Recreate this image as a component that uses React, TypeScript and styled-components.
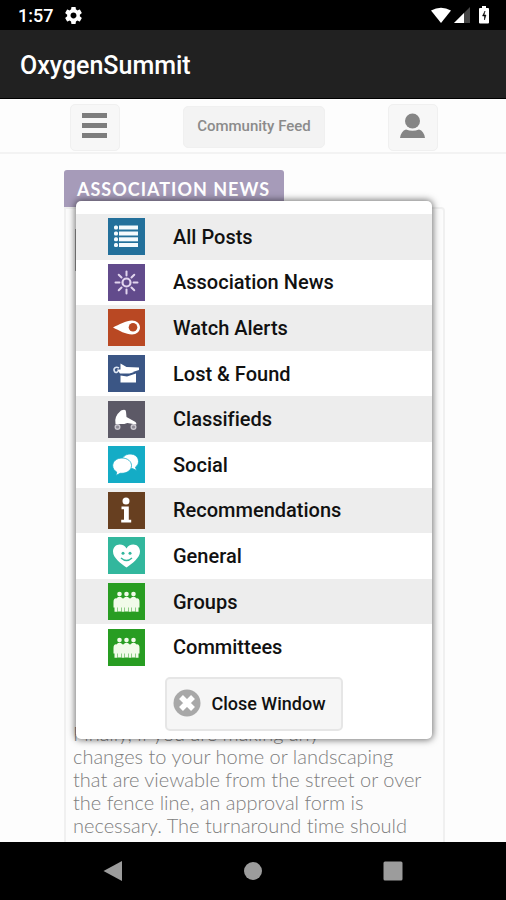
import React from "react";
import styled, { createGlobalStyle } from "styled-components";

const GlobalStyle = createGlobalStyle`
  *, *::before, *::after { box-sizing: border-box; }
  body {
    margin: 0;
    background: #000;
    font-family: Roboto, "Liberation Sans", sans-serif;
    font-variant-ligatures: none;
  }
  button { font: inherit; color: inherit; cursor: pointer; padding: 0; }
`;

const Screen = styled.div`
  display: flex;
  flex-direction: column;
  height: 100vh;
  overflow: hidden;
`;

const StatusBar = styled.div`
  display: flex;
  flex: none;
  align-items: center;
  justify-content: space-between;
  height: 30px;
  padding: 0 15px 0 18px;
  background: #000;
  color: #fff;
  font-size: 18px;
  font-weight: 500;
`;

const StatusGroup = styled.div<{ $gap: number }>`
  display: flex;
  align-items: center;
  gap: ${(p) => p.$gap}px;
`;

const AppBar = styled.header`
  display: flex;
  flex: none;
  align-items: center;
  height: 69px;
  padding: 4px 20px 0;
  background: #212121;
  border-bottom: 1px solid #000;
`;

const AppTitle = styled.h1`
  margin: 0;
  color: #fff;
  font-size: 25px;
  font-weight: 500;
  line-height: 28px;
`;

const Content = styled.div`
  position: relative;
  flex: 1;
  min-height: 0;
  overflow: hidden;
  background: #fdfdfd;
`;

const Toolbar = styled.nav`
  display: flex;
  align-items: center;
  justify-content: space-between;
  height: 55px;
  padding: 3px 68px 0 70px;
  border-bottom: 2px solid #f3f3f3;
`;

const ToolButton = styled.button<{ $wide?: boolean }>`
  display: flex;
  align-items: center;
  justify-content: center;
  width: ${(p) => (p.$wide ? 142 : 50)}px;
  height: ${(p) => (p.$wide ? 42 : 47)}px;
  padding-bottom: 2px;
  border: 1px solid #f0f0f0;
  border-radius: 5px;
  background: ${(p) => (p.$wide ? "#f3f3f3" : "#f7f7f7")};
  color: #8b8b8b;
  font-size: 15px;
  font-weight: 500;
`;

const Post = styled.article`
  margin: 16px 61px 0 64px;
`;

const PostTag = styled.h2`
  width: fit-content;
  height: 37px;
  margin: 0;
  padding: 0 14px 0 13px;
  border-radius: 3px 3px 0 0;
  background: #a69bb9;
  color: #fff;
  font-family: Lato, sans-serif;
  font-size: 18px;
  font-weight: 700;
  line-height: 38px;
  letter-spacing: 1px;
`;

const PostBody = styled.div`
  padding: 20px 9px 24px;
  border: 2px solid #f0f0f0;
  border-radius: 0 4px 0 0;
  background: #fcfcfc;
`;

const PostHeader = styled.div`
  display: flex;
  height: 493px;
`;

const Avatar = styled.div`
  width: 42px;
  height: 42px;
  background: #9a9a9a;
`;

const PostText = styled.p`
  margin: 0 0 0 -2px;
  color: #7e7e7e;
  font-family: Lato, sans-serif;
  font-size: 20px;
  font-weight: 300;
  line-height: 23px;
  white-space: pre-line;
`;

const Overlay = styled.div`
  position: absolute;
  inset: 0;
  padding: 102px 74px 0 76px;
`;

const Dialog = styled.section`
  display: flex;
  flex-direction: column;
  padding: 13px 0 8px;
  border-radius: 5px;
  background: #fff;
  box-shadow: 0 0 7px 1px rgba(0, 0, 0, 0.55);
`;

const CategoryList = styled.ul`
  display: grid;
  grid-auto-rows: 1fr;
  height: 456px;
  margin: 0;
  padding: 0;
  list-style: none;
`;

const CategoryItem = styled.li`
  display: flex;
  background: #fff;
  &:nth-child(odd) { background: #ededed; }
`;

const CategoryButton = styled.button`
  display: flex;
  align-items: center;
  gap: 28px;
  width: 100%;
  padding: 0 32px;
  border: 0;
  background: none;
  color: #111;
  font-size: 20px;
  font-weight: 500;
  text-align: left;
`;

const Tile = styled.svg<{ $color: string }>`
  flex: none;
  width: 37px;
  height: 37px;
  background: ${(p) => p.$color};
`;

const CloseButton = styled.button`
  display: flex;
  align-items: center;
  align-self: center;
  gap: 10px;
  height: 54px;
  margin-top: 7px;
  padding: 0 15px 2px 6px;
  border: 2px solid #e6e6e6;
  border-radius: 5px;
  background: #f6f6f6;
  color: #111;
  font-size: 18px;
  font-weight: 500;
`;

const SystemNav = styled.nav`
  display: flex;
  flex: none;
  justify-content: center;
  height: 58px;
  background: #000;
`;

const SystemButton = styled.button`
  display: flex;
  align-items: center;
  justify-content: center;
  width: 140px;
  border: 0;
  background: none;
`;

const people = (
  <g fill="#f1fbe9">
    {[11.5, 18.5, 25.5].map((x) => (
      <g key={x}>
        <circle cx={x} cy="11" r="2.3" />
        <path d={`M${x - 2.7} 15q2.7-2.6 5.4 0v7h-1.2v6.500h-3V22h-1.2z`} />
      </g>
    ))}
    {[8, 15, 22, 29].map((x) => (
      <path key={x} d={`M${x - 2.5} 19q0-3.700 2.500-3.700t2.500 3.700v5.500h-1v4.300h-3v-4.300h-1z`} />
    ))}
  </g>
);

type Category = { label: string; color: string; art: React.ReactNode };

const categories: Category[] = [
  {
    label: "All Posts",
    color: "#23709b",
    art: (
      <g fill="#f4fafd">
        {[7.5, 13.5, 19.3, 25].map((y) => (
          <g key={y}>
            <rect x="6" y={y} width="4" height="4" rx="1.5" />
            <rect x="11" y={y} width="19" height="4" />
          </g>
        ))}
      </g>
    ),
  },
  {
    label: "Association News",
    color: "#624b8c",
    art: (
      <g stroke="#e2d5ee" strokeWidth="2" strokeLinecap="round" fill="none">
        <circle cx="18.5" cy="18.5" r="4" strokeWidth="2.2" />
        {[0, 45, 90, 135, 180, 225, 270, 315].map((a) => (
          <path key={a} d="M18.5 11.500V7.500" transform={`rotate(${a} 18.5 18.5)`} />
        ))}
      </g>
    ),
  },
  {
    label: "Watch Alerts",
    color: "#b94823",
    art: (
      <g>
        <path d="M5 18.5C11 15.5 18 11.5 24 11.5c4.5 0 8 3 8 7s-3.500 7-8 7c-6 0-13-4-19-7z" fill="#fff" />
        <circle cx="25" cy="18.300" r="4.300" fill="#b94823" />
      </g>
    ),
  },
  {
    label: "Lost & Found",
    color: "#3b5685",
    art: (
      <g fill="#fff">
        <path d="M11 13C7.500 11 5 13.500 6.500 16.500c1 1.700 3.500 1 3.500-1" fill="none" stroke="#dce6f3" strokeWidth="1.600" />
        <path d="M12.500 8.500l6 3.500 12.500.5v2.500l-9.500 3h-9z" />
        <path d="M9 14.500h12l5 2.500-4.500 1.500H12z" />
        <path d="M12.500 20.500l6.500 1 9-3v9H12.500z" />
      </g>
    ),
  },
  {
    label: "Classifieds",
    color: "#5c5966",
    art: (
      <g fill="#fff">
        <path d="M13 9.500q5-2 5 1.200l.5 5.300 9 5q1.200 1 .8 2.500l-9-1.500-3 1H7.500q-1.700-7.500 5.500-13.500z" />
        <circle cx="9.500" cy="26" r="2.300" fill="#8d8a95" stroke="#c9c6ce" strokeWidth="1.400" />
        <circle cx="25.500" cy="26" r="2.300" fill="#8d8a95" stroke="#c9c6ce" strokeWidth="1.400" />
      </g>
    ),
  },
  {
    label: "Social",
    color: "#14acc6",
    art: (
      <g fill="#fff" stroke="#14acc6" strokeWidth="0.800">
        <path d="M22 8c5 0 8.500 3 8.500 7.500 0 2.400-1.200 4.300-3 5.500l1 3.500-4-2c-6 1-11-2-11-7 0-4 4-7.500 8.500-7.500z" />
        <path d="M14 12c5.500 0 9.500 3.400 9.500 7.600s-4 7.700-9.500 7.700h-1.800L8 29.500l.7-3.500c-2.500-1.200-4-3.700-4-6.400 0-4.200 4-7.600 9.300-7.600z" />
      </g>
    ),
  },
  {
    label: "Recommendations",
    color: "#673f20",
    art: (
      <g fill="#fff">
        <circle cx="18" cy="9" r="3.500" />
        <path d="M13.500 14.500h7.300v13.300h2.400v2.700h-10v-2.700H16V17.200h-2.500z" />
      </g>
    ),
  },
  {
    label: "General",
    color: "#32b79d",
    art: (
      <g>
        <path d="M18.500 30.500C13 26.500 5 21 5 14.500 5 10.300 8 7.500 11.700 7.500c3 0 5.500 1.500 6.800 4 1.300-2.500 3.800-4 6.800-4 3.700 0 6.700 2.800 6.700 7 0 6.500-8 12-13.500 16z" fill="#fff" />
        <circle cx="15" cy="16.300" r="1.500" fill="#32b79d" />
        <circle cx="22" cy="16.300" r="1.500" fill="#32b79d" />
        <path d="M13 21q5.500 5 11 0" fill="none" stroke="#32b79d" strokeWidth="1.400" />
      </g>
    ),
  },
  { label: "Groups", color: "#289d22", art: people },
  { label: "Committees", color: "#289d22", art: people },
];

export default function App() {
  return (
    <Screen>
      <GlobalStyle />
      <StatusBar>
        <StatusGroup $gap={12}>
          <span>1:57</span>
          <svg width="17" height="17" viewBox="2 2 20 20" aria-hidden="true">
            <path fill="#fff" d="M19.430 12.980c.04-.320.070-.640.070-.980s-.030-.660-.070-.980l2.110-1.650c.190-.150.240-.420.120-.640l-2-3.460c-.120-.220-.390-.300-.610-.220l-2.490 1c-.520-.400-1.080-.730-1.690-.980l-.380-2.650C14.460 2.180 14.250 2 14 2h-4c-.250 0-.460.180-.490.420l-.380 2.650c-.610.250-1.170.590-1.690.980l-2.490-1c-.230-.090-.490 0-.610.220l-2 3.460c-.130.220-.070.490.120.640l2.110 1.650c-.040.320-.070.650-.070.980s.030.660.070.980l-2.110 1.650c-.190.150-.240.420-.120.640l2 3.460c.120.220.390.300.610.220l2.490-1c.520.400 1.080.730 1.690.980l.380 2.650c.030.240.240.420.490.420h4c.250 0 .460-.180.490-.420l.380-2.650c.610-.250 1.170-.590 1.690-.980l2.490 1c.230.090.490 0 .610-.220l2-3.460c.120-.220.070-.490-.120-.640l-2.110-1.650zM12 15.500c-1.930 0-3.500-1.570-3.500-3.500s1.570-3.500 3.500-3.500 3.500 1.570 3.500 3.500-1.570 3.500-3.500 3.500z" />
          </svg>
        </StatusGroup>
        <StatusGroup $gap={2}>
          <svg width="20" height="18" viewBox="0 0 20 18" aria-hidden="true">
            <path d="M0 4.500Q10-1 20 4.500L10 17z" fill="#fff" />
          </svg>
          <svg width="17" height="18" viewBox="0 0 17 18" aria-hidden="true">
            <path d="M17 1v16H1z" fill="#454545" />
            <path d="M11 7v10H1z" fill="#fff" />
          </svg>
          <svg width="19" height="18" viewBox="0 0 19 18" aria-hidden="true">
            <path d="M10 2V0h4v2h2q1 0 1 1v13.500q0 1-1 1H8q-1 0-1-1V3q0-1 1-1z" fill="#fff" />
            <path d="M13 5L10.500 10h2v4L14 9h-2z" fill="#000" stroke="#000" strokeWidth="0.500" />
          </svg>
        </StatusGroup>
      </StatusBar>

      <AppBar>
        <AppTitle>OxygenSummit</AppTitle>
      </AppBar>

      <Content>
        <Toolbar>
          <ToolButton aria-label="Menu">
            <svg width="26" height="26" viewBox="0 0 26 26">
              <path d="M0 0h25v5H0zM0 10h25v5H0zM0 20h25v5H0z" fill="#7d7d7d" />
            </svg>
          </ToolButton>
          <ToolButton $wide>Community Feed</ToolButton>
          <ToolButton aria-label="Profile">
            <svg width="26" height="26" viewBox="0 0 26 26">
              <circle cx="12.500" cy="8" r="7.500" fill="#858585" />
              <path d="M0 25q1-7 6-8.500Q12.500 19 19 16.500q5 1.500 6 8.500z" fill="#858585" />
            </svg>
          </ToolButton>
        </Toolbar>

        <Post>
          <PostTag>ASSOCIATION NEWS</PostTag>
          <PostBody>
            <PostHeader>
              <Avatar />
            </PostHeader>
            <PostText>
              {"Finally, if you are making any\nchanges to your home or landscaping\nthat are viewable from the street or over\nthe fence line, an approval form is\nnecessary. The turnaround time should"}
            </PostText>
          </PostBody>
        </Post>

        <Overlay>
          <Dialog role="dialog" aria-label="Categories">
            <CategoryList>
              {categories.map((c) => (
                <CategoryItem key={c.label}>
                  <CategoryButton>
                    <Tile $color={c.color} viewBox="0 0 37 37" aria-hidden="true">
                      {c.art}
                    </Tile>
                    {c.label}
                  </CategoryButton>
                </CategoryItem>
              ))}
            </CategoryList>
            <CloseButton>
              <svg width="28" height="28" viewBox="0 0 28 28" aria-hidden="true">
                <circle cx="14" cy="14" r="13.500" fill="#a8a8a8" />
                <path d="M8 8l12 12M20 8L8 20" stroke="#fff" strokeWidth="5.500" />
              </svg>
              Close Window
            </CloseButton>
          </Dialog>
        </Overlay>
      </Content>

      <SystemNav>
        <SystemButton aria-label="Back">
          <svg width="20" height="22" viewBox="0 0 20 22"><path d="M0.500 11L19 1v20z" fill="#9c9c9c" /></svg>
        </SystemButton>
        <SystemButton aria-label="Home">
          <svg width="20" height="20" viewBox="0 0 20 20"><circle cx="10" cy="10" r="9" fill="#9c9c9c" /></svg>
        </SystemButton>
        <SystemButton aria-label="Recent apps">
          <svg width="20" height="20" viewBox="0 0 20 20"><rect x="0.500" y="0.500" width="19" height="19" rx="1.500" fill="#9c9c9c" /></svg>
        </SystemButton>
      </SystemNav>
    </Screen>
  );
}
